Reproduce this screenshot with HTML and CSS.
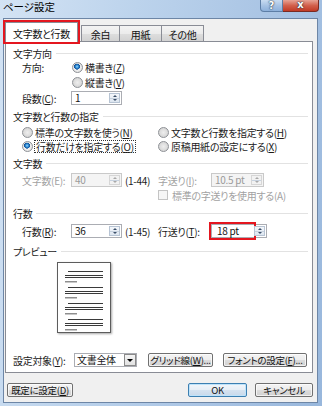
FILE: index.html
```html
<!DOCTYPE html>
<html lang="ja">
<head>
<meta charset="utf-8">
<title>ページ設定</title>
<link rel="stylesheet" href="styles.css">
</head>
<body>
<div class="window">
  <div class="titlebar">
    <span class="title">ページ設定</span>
    <div class="caption-buttons">
      <div class="cap-btn help">?</div>
      <div class="cap-btn close">x</div>
    </div>
  </div>
  <div class="client">
    <div class="tabs">
      <div class="tab active">文字数と行数</div>
      <div class="tab t-yohaku">余白</div>
      <div class="tab t-yoshi">用紙</div>
      <div class="tab t-sonota">その他</div>
    </div>
    <div class="panel">
      <div class="sec-head">文字方向</div>
      <div class="row">
        <span class="lbl w-dir">方向:</span>
        <span class="opt"><span class="radio checked"></span>横書き(<u>Z</u>)</span>
      </div>
      <div class="row">
        <span class="lbl w-dir"></span>
        <span class="opt"><span class="radio"></span>縦書き(<u>V</u>)</span>
      </div>
      <div class="row r-input m1">
        <span class="lbl w-in">段数(<u>C</u>):</span>
        <span class="spinbox w-left"><span class="val">1</span><span class="spin"><i class="up"></i><i class="dn"></i></span></span>
      </div>

      <div class="sec-head m4">文字数と行数の指定</div>
      <div class="grid2 m2">
        <span class="opt"><span class="radio"></span>標準の文字数を使う(<u>N</u>)</span>
        <span class="opt"><span class="radio"></span>文字数と行数を指定する(<u>H</u>)</span>
        <span class="opt"><span class="radio checked"></span><span class="focus">行数だけを指定する(<u>O</u>)</span></span>
        <span class="opt"><span class="radio"></span>原稿用紙の設定にする(<u>X</u>)</span>
      </div>

      <div class="sec-head m3">文字数</div>
      <div class="row r-input m3">
        <span class="lbl w-in dis">文字数(E):</span>
        <span class="spinbox w-left disabled"><span class="val">40</span><span class="spin"><i class="up"></i><i class="dn"></i></span></span>
        <span class="range">(1-44)</span>
        <span class="lbl w-right dis">字送り(<u>I</u>):</span>
        <span class="spinbox w-right disabled"><span class="val">10.5 pt</span><span class="spin"><i class="up"></i><i class="dn"></i></span></span>
      </div>
      <div class="row chk-row m1">
        <span class="checkbox"></span><span class="dis">標準の字送りを使用する(A)</span>
      </div>

      <div class="sec-head m4">行数</div>
      <div class="row r-input m4">
        <span class="lbl w-in">行数(<u>R</u>):</span>
        <span class="spinbox w-left"><span class="val">36</span><span class="spin"><i class="up"></i><i class="dn"></i></span></span>
        <span class="range">(1-45)</span>
        <span class="lbl w-right">行送り(<u>T</u>):</span>
        <span class="spinbox w-right2"><span class="val marked">18 pt</span><span class="spin"><i class="up"></i><i class="dn"></i></span></span>
      </div>

      <div class="sec-head m6">プレビュー</div>
      <div class="preview">
        <div class="page">
          <div class="para"><i class="ln first"></i><i class="ln"></i><i class="ln"></i><i class="ln short"></i></div>
          <div class="para"><i class="ln first"></i><i class="ln"></i><i class="ln"></i><i class="ln short"></i></div>
          <div class="para"><i class="ln first"></i><i class="ln"></i><i class="ln"></i><i class="ln short"></i></div>
          <div class="para"><i class="ln first"></i><i class="ln"></i><i class="ln"></i><i class="ln short"></i></div>
        </div>
      </div>

      <div class="row apply-row">
        <span class="lbl w-apply">設定対象(<u>Y</u>):</span>
        <span class="combo"><span class="val">文書全体</span><span class="drop"><i></i></span></span>
        <span class="btn b-grid">グリッド線(<u>W</u>)...</span>
        <span class="btn b-font">フォントの設定(<u>F</u>)...</span>
      </div>
    </div>
    <div class="footer">
      <span class="btn b-default">既定に設定(<u>D</u>)</span>
      <span class="btn b-ok">OK</span>
      <span class="btn b-cancel">キャンセル</span>
    </div>
  </div>
</div>
</body>
</html>
```

FILE: styles.css
```css
* { box-sizing: border-box; }
html, body { margin: 0; padding: 0; }
body {
  width: 322px;
  height: 406px;
  overflow: hidden;
  font-family: "Noto Sans CJK JP", "Noto Sans", sans-serif;
  font-size: 10px;
  font-feature-settings: "palt";
  letter-spacing: -0.3px;
  color: #1b1b1b;
  background: linear-gradient(100deg, #d3e3f4 0%, #bcd3ec 35%, #a9c4e4 70%, #98b7dc 100%);
}
u { text-decoration: underline; text-underline-offset: 1px; }
i { display: block; font-style: normal; }

.window { display: flex; flex-direction: column; height: 406px; }

.titlebar { height: 18px; display: flex; align-items: flex-start; }
.title { padding-left: 3px; font-size: 10.5px; line-height: 14px; color: #000; letter-spacing: 0; }
.caption-buttons { margin-left: auto; margin-right: 3px; display: flex; }
.cap-btn {
  height: 12px;
  display: flex; align-items: center; justify-content: center;
  color: #fff; font-weight: bold; font-family: "DejaVu Sans", sans-serif;
  font-size: 10px; line-height: 10px; letter-spacing: 0;
  text-shadow: 0 0 2px #203040, 0 0 1px #203040;
}
.help {
  width: 23px;
  border: 1px solid #5d7ea6; border-top: none;
  border-radius: 0 0 0 4px;
  background: linear-gradient(#c9dcf1, #a4c1e3 55%, #8eb1db);
}
.close {
  width: 36px;
  border: 1px solid #7a2a22; border-top: none; border-left: none;
  border-radius: 0 0 4px 0;
  background: linear-gradient(#e7a395, #d2604c 50%, #c13a25);
  padding-bottom: 2px;
}

.client {
  margin-left: 3px;
  width: 315px;
  height: 385px;
  background: #f0f0f0;
  border: 1px solid #6d86a6;
  display: flex;
  flex-direction: column;
}

/* tabs */
.tabs { height: 22px; display: flex; align-items: flex-end; padding-left: 1px; }
.tab {
  height: 16px;
  border: 1px solid #898c95;
  border-bottom: none;
  border-right: none;
  background: linear-gradient(#f3f3f3, #ebebeb 50%, #dedede 50%, #d2d2d2);
  display: flex; align-items: center; justify-content: center;
  padding-top: 1px;
  color: #111;
}
.tab.active {
  width: 73px;
  height: 20px;
  margin-bottom: -1px;
  border-right: 1px solid #898c95;
  background: #fff;
  position: relative;
  z-index: 1;
  outline: 2px solid #e4161f;
  padding-top: 2px;
}
.t-yohaku { width: 38px; margin-left: 3px; }
.t-yoshi { width: 42px; }
.t-sonota { width: 43px; border-right: 1px solid #898c95; }

/* panel */
.panel {
  margin-left: 1px;
  width: 308px;
  height: 332px;
  border: 1px solid #898c95;
  background: #fff;
  padding: 4px 4px 0 7px;
  display: flex;
  flex-direction: column;
}
.sec-head { height: 14px; display: flex; align-items: center; color: #1b1b1b; }
.sec-head::after {
  content: "";
  flex: 1;
  margin-left: 4px;
  border-top: 1px solid #e2e2e2;
}
.m1 { margin-top: 1px; }
.m2 { margin-top: 2px; }
.m3 { margin-top: 3px; }
.m4 { margin-top: 4px; }
.m6 { margin-top: 6px; }

.row { height: 15px; display: flex; align-items: center; padding-left: 9px; }
.row.r-input { height: 14px; }
.lbl { flex: none; white-space: nowrap; }
.w-dir { width: 50px; }
.w-in { width: 49px; }
.w-right { width: 43px; }
.range { width: 33px; margin-left: 3px; flex: none; color: #1b1b1b; }
.dis { color: #a2a2a2; }

.opt { display: flex; align-items: center; white-space: nowrap; height: 14px; }
.radio {
  flex: none;
  width: 11px; height: 11px;
  margin-right: 2px;
  border-radius: 50%;
  border: 1px solid #8e9196;
  background: radial-gradient(circle at 50% 50%, #eeeeee 0, #dcdcdc 55%, #c8c8c8 100%);
}
.radio.checked {
  background:
    radial-gradient(circle at 45% 40%, #8fd8ff 0, #2b86cf 1.6px, #114f96 2.8px, rgba(17,79,150,0) 3.2px),
    radial-gradient(circle at 50% 50%, #ffffff 0, #e9e9e9 60%, #cfcfcf 100%);
}
.focus { outline: 1px dotted #333; outline-offset: 0; padding: 0 1px; line-height: 11px; }

.grid2 {
  display: grid;
  grid-template-columns: 136px auto;
  grid-auto-rows: 14px;
  padding-left: 9px;
  align-items: center;
}

.spinbox {
  flex: none;
  height: 14px;
  display: flex;
  border: 1px solid #abadb3;
  background: #fff;
}
.spinbox .val { flex: 1; padding-left: 3px; line-height: 12px; white-space: nowrap; color: #111; }
.w-left { width: 51px; }
.w-right { width: 53px; }
.w-right2 { width: 56px; }
.spin {
  width: 11px;
  margin: 1px 1px 1px 0;
  display: flex; flex-direction: column;
  border: 1px solid #b7c4d4;
  background: linear-gradient(#f4f7fb, #dde6f0);
}
.spin i { flex: 1; display: flex; align-items: center; justify-content: center; }
.spin .up { border-bottom: 1px solid #c7d2df; }
.spin .up::after {
  content: ""; border-left: 2px solid transparent; border-right: 2px solid transparent;
  border-bottom: 2px solid #3b4f69;
}
.spin .dn::after {
  content: ""; border-left: 2px solid transparent; border-right: 2px solid transparent;
  border-top: 2px solid #3b4f69;
}
.spinbox.disabled { border-color: #c9c9c9; background: #f4f4f4; }
.spinbox.disabled .val { color: #9a9a9a; }
.spinbox.disabled .spin { border-color: #d6d6d6; background: #f2f2f2; }
.spinbox.disabled .spin i::after { border-top-color: #a8a8a8; border-bottom-color: #a8a8a8; }
.val.marked { outline: 2px solid #e4161f; outline-offset: 1px; padding-left: 5px; margin-right: 1px; }

.chk-row { height: 14px; padding-left: 145px; }
.checkbox {
  flex: none;
  width: 10px; height: 10px;
  margin-right: 4px;
  border: 1px solid #c4c4c4;
  background: #f6f6f6;
}

/* preview */
.preview { margin-top: 4px; height: 71px; padding-left: 44px; }
.page {
  width: 54px; height: 71px;
  border: 1px solid #5d5d5d;
  background: #fff;
  box-shadow: 1px 1px 2px rgba(0,0,0,0.35);
  padding: 8px 7px 0 7px;
}
.para { height: 16px; display: flex; flex-direction: column; }
.ln { height: 1px; background: #3a3a3a; margin-top: 1px; }
.ln.first { margin-top: 0; margin-left: 3px; }
.ln:nth-child(2) { margin-top: 3px; }
.ln.short { width: 12px; margin-top: 3px; background: #8e8e8e; height: 1px; box-shadow: 0 1px 0 #c8c8c8; }

/* apply row */
.apply-row { margin-top: 20px; height: 14px; padding-left: 0; }
.w-apply { width: 61px; }
.combo {
  flex: none;
  width: 63px; height: 14px;
  border: 1px solid #abadb3;
  background: #fff;
  display: flex;
}
.combo .val { flex: 1; padding-left: 2px; line-height: 12px; }
.combo .drop {
  width: 12px;
  border: 1px solid #8a8a8a;
  background: linear-gradient(#f4f4f4, #e2e2e2);
  display: flex; align-items: center; justify-content: center;
}
.combo .drop i {
  border-left: 3px solid transparent; border-right: 3px solid transparent;
  border-top: 3px solid #000;
}

.btn {
  flex: none;
  height: 14px;
  border: 1px solid #707070;
  border-radius: 2px;
  background: linear-gradient(#f4f4f4, #ececec 50%, #dddddd 50%, #d0d0d0);
  box-shadow: inset 0 0 0 1px rgba(255,255,255,0.7);
  display: flex; align-items: center; justify-content: center;
  white-space: nowrap;
  color: #111;
  font-size: 9.5px;
  line-height: 12px;
}
.b-grid { width: 65px; margin-left: 11px; }
.b-font { width: 84px; margin-left: 10px; }

.footer {
  margin-top: 10px;
  display: flex;
  padding: 0 4px 0 3px;
}
.b-default { width: 66px; }
.b-ok {
  width: 59px;
  margin-left: auto;
  border-color: #3c7fb1;
  background: linear-gradient(#f2f6fa, #e6eef6 50%, #d6e3f0 50%, #c9d9ea);
  box-shadow: inset 0 0 0 1px #bfe3fa;
}
.b-cancel { width: 58px; margin-left: 8px; }
```
